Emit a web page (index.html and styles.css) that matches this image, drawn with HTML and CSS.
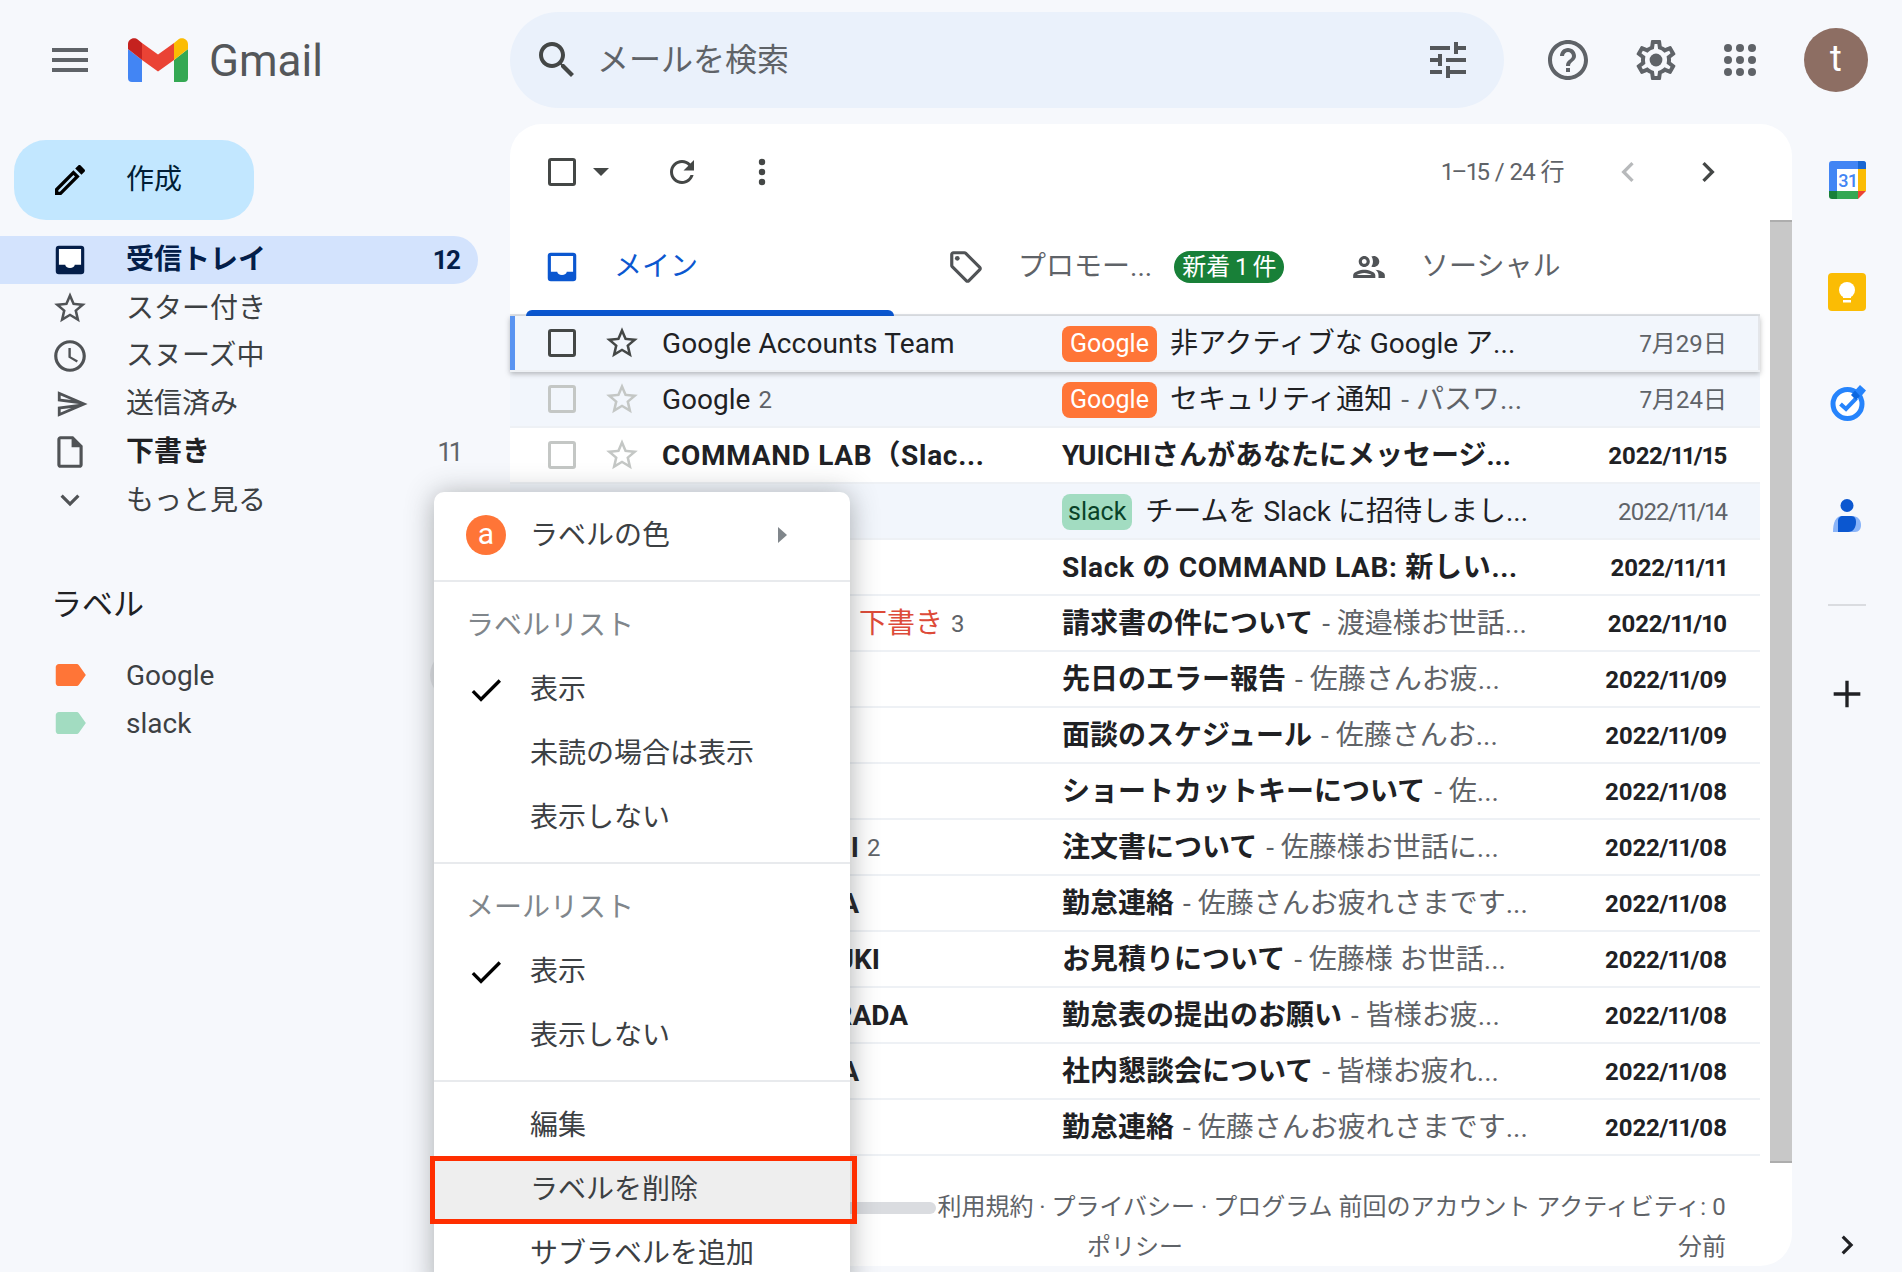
FILE: index.html
```html
<!DOCTYPE html>
<html lang="ja">
<head>
    <meta charset="UTF-8">
    <title>受信トレイ - Gmail</title>
    <link rel="stylesheet" href="styles.css">
</head>
<body>
    <svg class="sprite" width="0" height="0">
        <symbol id="star" viewBox="0 0 24 24"><path d="M22 9.24l-7.19-.62L12 2 9.19 8.63 2 9.24l5.46 4.73L5.82 21 12 17.27 18.18 21l-1.63-7.03L22 9.24zM12 15.4l-3.76 2.27 1-4.28-3.32-2.88 4.38-.38L12 6.1l1.71 4.04 4.38.38-3.32 2.88 1 4.28L12 15.4z"/></symbol>
        <symbol id="check" viewBox="0 0 24 24"><path d="M9 16.17L4.83 12l-1.42 1.41L9 19 21 7l-1.41-1.41z"/></symbol>
        <symbol id="label" viewBox="0 0 24 24"><path d="M17.63 5.84C17.27 5.33 16.67 5 16 5L5 5.01C3.9 5.01 3 5.9 3 7v10c0 1.1.9 1.99 2 1.99L16 19c.67 0 1.27-.33 1.63-.84L22 12l-4.37-6.16z"/></symbol>
        <symbol id="tray" viewBox="0 0 24 24"><rect x="3" y="3" width="18" height="18" rx="2"/><path fill="#fff" d="M5 5h14v10h-4c0 1.2-1.3 2-3 2s-3-.8-3-2H5z"/></symbol>
    </svg>

    <header class="topbar">
        <div class="brand">
            <svg class="icon menu-icon" viewBox="0 0 24 24"><path d="M3 18h18v-2H3v2zm0-5h18v-2H3v2zm0-7v2h18V6H3z"/></svg>
            <svg class="logo" viewBox="0 0 60 44">
                <path fill="#4285f4" d="M0 11l14 11v22H4a4 4 0 0 1-4-4z"/>
                <path fill="#34a853" d="M46 22l14-11v29a4 4 0 0 1-4 4H46z"/>
                <path fill="#ea4335" d="M14 5l16 11.500L46 5v17L30 33.500 14 22z"/>
                <path fill="#c5221f" d="M0 6.500C0 1 6-1.500 10 1.800L14 5v17L0 11z"/>
                <path fill="#fbbc04" d="M46 5l4-3.200C54-1.500 60 1 60 6.500V11L46 22z"/>
            </svg>
            <span class="wordmark">Gmail</span>
        </div>
        <div class="search">
            <svg class="icon" viewBox="0 0 24 24"><path d="M15.500 14h-.79l-.28-.27C15.410 12.590 16 11.110 16 9.500 16 5.910 13.090 3 9.500 3S3 5.910 3 9.500 5.910 16 9.500 16c1.610 0 3.090-.59 4.230-1.570l.27.28v.79l5 4.990L20.490 19l-4.990-5zm-6 0C7.010 14 5 11.990 5 9.500S7.010 5 9.500 5 14 7.010 14 9.500 11.990 14 9.500 14z"/></svg>
            <span class="search-text">メールを検索</span>
            <svg class="icon tune" viewBox="0 0 24 24"><path d="M3 17v2h6v-2H3zM3 5v2h10V5H3zm10 16v-2h8v-2h-8v-2h-2v6h2zM7 9v2H3v2h4v2h2V9H7zm14 4v-2H11v2h10zm-6-4h2V7h4V5h-4V3h-2v6z"/></svg>
        </div>
        <div class="top-actions">
            <svg class="icon" viewBox="0 0 24 24"><path d="M11 18h2v-2h-2v2zm1-16C6.480 2 2 6.480 2 12s4.480 10 10 10 10-4.480 10-10S17.520 2 12 2zm0 18c-4.410 0-8-3.590-8-8s3.590-8 8-8 8 3.590 8 8-3.590 8-8 8zm0-14c-2.210 0-4 1.790-4 4h2c0-1.100.9-2 2-2s2 .9 2 2c0 2-3 1.750-3 5h2c0-2.250 3-2.500 3-5 0-2.210-1.790-4-4-4z"/></svg>
            <svg class="icon" viewBox="0 0 24 24"><path d="M19.430 12.980c.04-.32.07-.64.07-.98 0-.34-.03-.66-.07-.98l2.110-1.650c.19-.15.24-.42.12-.64l-2-3.460c-.09-.16-.26-.25-.44-.25-.06 0-.12.01-.17.03l-2.490 1c-.52-.4-1.080-.73-1.690-.98l-.38-2.650C14.460 2.180 14.250 2 14 2h-4c-.25 0-.46.18-.49.42l-.38 2.650c-.61.25-1.170.59-1.690.98l-2.490-1c-.06-.02-.12-.03-.18-.03-.17 0-.34.09-.43.25l-2 3.460c-.13.22-.07.49.12.64l2.110 1.650c-.04.32-.07.65-.07.98 0 .33.03.66.07.98l-2.110 1.650c-.19.15-.24.42-.12.64l2 3.460c.09.16.26.25.44.25.06 0 .12-.01.17-.03l2.490-1c.52.4 1.080.73 1.690.98l.38 2.650c.03.24.24.42.49.42h4c.25 0 .46-.18.49-.42l.38-2.650c.61-.25 1.170-.59 1.690-.98l2.490 1c.06.02.12.03.18.03.17 0 .34-.09.43-.25l2-3.460c.12-.22.07-.49-.12-.64l-2.110-1.650zm-1.980-1.710c.04.31.05.52.05.73 0 .21-.02.43-.05.73l-.14 1.130.89.7 1.080.84-.7 1.210-1.270-.51-1.040-.42-.9.68c-.43.32-.84.56-1.250.73l-1.060.43-.16 1.130-.2 1.350h-1.400l-.19-1.350-.16-1.130-1.060-.43c-.43-.18-.83-.41-1.230-.71l-.91-.7-1.060.43-1.270.51-.7-1.210 1.080-.84.89-.7-.14-1.130c-.03-.31-.05-.54-.05-.74s.02-.43.05-.73l.14-1.130-.89-.7-1.080-.84.7-1.210 1.270.51 1.040.42.9-.68c.43-.32.84-.56 1.250-.73l1.060-.43.16-1.130.2-1.350h1.390l.19 1.350.16 1.130 1.060.43c.43.18.83.41 1.230.71l.91.7 1.060-.43 1.270-.51.7 1.210-1.070.85-.89.7.14 1.130z"/><circle cx="12" cy="12" r="3.200"/></svg>
            <svg class="icon" viewBox="0 0 48 48"><circle cx="12" cy="12" r="4"/><circle cx="24" cy="12" r="4"/><circle cx="36" cy="12" r="4"/><circle cx="12" cy="24" r="4"/><circle cx="24" cy="24" r="4"/><circle cx="36" cy="24" r="4"/><circle cx="12" cy="36" r="4"/><circle cx="24" cy="36" r="4"/><circle cx="36" cy="36" r="4"/></svg>
            <div class="avatar">t</div>
        </div>
    </header>

    <div class="main">
        <aside class="sidebar">
            <div class="compose">
                <svg class="compose-icon" viewBox="0 0 24 24"><path d="M3 17.250V21h3.750L17.810 9.940l-3.750-3.750L3 17.250zM5.920 19H5v-.92l9.060-9.060.92.92L5.920 19zM20.710 5.630l-2.340-2.340c-.2-.2-.45-.29-.71-.29s-.51.1-.7.29l-1.830 1.830 3.750 3.750 1.830-1.830c.39-.39.39-1.020 0-1.410z"/></svg>
                <span>作成</span>
            </div>
            <nav>
                <div class="nav-row nav-active">
                    <svg class="nav-icon"><use href="#tray"/></svg>
                    <span class="nav-name">受信トレイ</span>
                    <span class="nav-count">12</span>
                </div>
                <div class="nav-row">
                    <svg class="nav-icon"><use href="#star"/></svg>
                    <span class="nav-name nudge">スター付き</span>
                </div>
                <div class="nav-row">
                    <svg class="nav-icon" viewBox="0 0 24 24"><path d="M11.990 2C6.470 2 2 6.480 2 12s4.470 10 9.990 10C17.520 22 22 17.520 22 12S17.520 2 11.990 2zM12 20c-4.420 0-8-3.580-8-8s3.580-8 8-8 8 3.580 8 8-3.580 8-8 8zm.5-13H11v6l5.250 3.150.75-1.230-4.500-2.670z"/></svg>
                    <span class="nav-name">スヌーズ中</span>
                </div>
                <div class="nav-row">
                    <span class="nav-icon send-box"><svg class="send-icon" viewBox="0 0 24 24"><path d="M4.010 6.030l7.510 3.220-7.520-1 .01-2.220m7.500 8.720L4 17.970v-2.220l7.510-1M2.010 3L2 10l15 2-15 2 .01 7L23 12 2.010 3z"/></svg></span>
                    <span class="nav-name">送信済み</span>
                </div>
                <div class="nav-row nav-bold">
                    <svg class="nav-icon" viewBox="0 0 24 24"><path d="M14 2H6c-1.100 0-1.990.9-1.990 2L4 20c0 1.100.89 2 1.990 2H18c1.100 0 2-.9 2-2V8l-6-6zM6 20V4h7v5h5v11H6z"/></svg>
                    <span class="nav-name">下書き</span>
                    <span class="nav-count count-plain">11</span>
                </div>
                <div class="nav-row">
                    <svg class="nav-icon" viewBox="0 0 24 24"><path d="M16.590 8.590L12 13.170 7.410 8.590 6 10l6 6 6-6z"/></svg>
                    <span class="nav-name nudge">もっと見る</span>
                </div>
            </nav>
            <div class="label-head">
                <span class="label-title">ラベル</span>
                <svg class="label-plus" viewBox="0 0 24 24"><path d="M2 11h20v2H2z"/><path d="M11 2h2v20h-2z"/></svg>
            </div>
            <div class="nav-row">
                <svg class="nav-icon label-orange"><use href="#label"/></svg>
                <span class="nav-name nudge">Google</span>
                <span class="label-more"></span>
            </div>
            <div class="nav-row">
                <svg class="nav-icon label-green"><use href="#label"/></svg>
                <span class="nav-name nudge">slack</span>
            </div>
        </aside>

        <section class="card">
            <div class="toolbar">
                <span class="box"></span>
                <span class="caret"></span>
                <svg class="tool refresh" viewBox="0 0 24 24"><path d="M17.650 6.350C16.200 4.900 14.210 4 12 4c-4.420 0-7.990 3.580-7.990 8s3.570 8 7.990 8c3.730 0 6.840-2.550 7.730-6h-2.080c-.82 2.330-3.040 4-5.650 4-3.310 0-6-2.690-6-6s2.690-6 6-6c1.660 0 3.140.69 4.220 1.780L13 11h7V4l-2.350 2.350z"/></svg>
                <svg class="tool more" viewBox="0 0 36 36"><circle cx="18" cy="8" r="3.200"/><circle cx="18" cy="18" r="3.200"/><circle cx="18" cy="28" r="3.200"/></svg>
                <span class="pages">1–15 / 24 行</span>
                <svg class="chevron chevron-off" viewBox="0 0 24 24"><path d="M15.410 7.410L14 6l-6 6 6 6 1.410-1.410L10.830 12z"/></svg>
                <svg class="chevron" viewBox="0 0 24 24"><path d="M10 6L8.590 7.410 13.170 12l-4.580 4.590L10 18l6-6z"/></svg>
            </div>

            <div class="tabs">
                <div class="tab tab-main">
                    <svg class="tab-icon"><use href="#tray"/></svg>
                    <span>メイン</span>
                </div>
                <div class="tab tab-promo">
                    <svg class="tab-icon" viewBox="0 0 24 24"><path d="M21.410 11.580l-9-9C12.050 2.220 11.550 2 11 2H4c-1.100 0-2 .9-2 2v7c0 .55.22 1.050.59 1.420l9 9c.36.36.86.58 1.410.58s1.050-.22 1.410-.59l7-7c.37-.36.59-.86.59-1.410s-.23-1.060-.59-1.420zM13 20.010L4 11V4h7v-.01l9 8.990-7 7.020z"/><circle cx="6.500" cy="6.500" r="1.500"/></svg>
                    <span>プロモー...</span>
                    <span class="new-badge">新着 1 件</span>
                </div>
                <div class="tab tab-social">
                    <svg class="tab-icon" viewBox="0 0 24 24"><path d="M9 13.750c-2.340 0-7 1.170-7 3.500V19h14v-1.750c0-2.330-4.660-3.500-7-3.500zM4.340 17c.84-.58 2.870-1.250 4.660-1.250s3.820.67 4.660 1.250H4.340zM9 12c1.930 0 3.500-1.570 3.500-3.500S10.930 5 9 5 5.500 6.570 5.500 8.500 7.070 12 9 12zm0-5c.83 0 1.500.67 1.500 1.500S9.830 10 9 10s-1.500-.67-1.500-1.500S8.170 7 9 7zm7.040 6.810c1.160.84 1.960 1.960 1.960 3.440V19h4v-1.750c0-2.020-3.500-3.170-5.960-3.440zM15 12c1.930 0 3.500-1.570 3.500-3.500S16.930 5 15 5c-.54 0-1.040.13-1.500.35.63.89 1 1.980 1 3.150s-.37 2.260-1 3.150c.46.22.96.35 1.500.35z"/></svg>
                    <span>ソーシャル</span>
                </div>
            </div>

            <div class="mail-list">
                <div class="row read hover">
                    <span class="box"></span><svg class="star"><use href="#star"/></svg>
                    <span class="sender">Google Accounts Team</span>
                    <span class="subject"><span class="chip chip-google">Google</span>非アクティブな Google ア...</span>
                    <span class="date">7月29日</span>
                </div>
                <div class="row read">
                    <span class="box"></span><svg class="star"><use href="#star"/></svg>
                    <span class="sender">Google <span class="num">2</span></span>
                    <span class="subject"><span class="chip chip-google">Google</span>セキュリティ通知 <span class="snippet">- パスワ...</span></span>
                    <span class="date">7月24日</span>
                </div>
                <div class="row">
                    <span class="box"></span><svg class="star"><use href="#star"/></svg>
                    <span class="sender latin">COMMAND LAB（Slac...</span>
                    <span class="subject">YUICHIさんがあなたにメッセージ...</span>
                    <span class="date">2022/11/15</span>
                </div>
                <div class="row read">
                    <span class="box"></span><svg class="star"><use href="#star"/></svg>
                    <span class="sender">Slack</span>
                    <span class="subject"><span class="chip chip-slack">slack</span>チームを Slack に招待しまし...</span>
                    <span class="date date-tight">2022/11/14</span>
                </div>
                <div class="row">
                    <span class="box"></span><svg class="star"><use href="#star"/></svg>
                    <span class="sender">Slack</span>
                    <span class="subject latin">Slack の COMMAND LAB: 新しい...</span>
                    <span class="date">2022/11/11</span>
                </div>
                <div class="row">
                    <span class="box"></span><svg class="star"><use href="#star"/></svg>
                    <span class="sender"><span class="name w197"></span><span class="draft">下書き</span> <span class="num">3</span></span>
                    <span class="subject">請求書の件について <span class="snippet">- 渡邉様お世話...</span></span>
                    <span class="date">2022/11/10</span>
                </div>
                <div class="row">
                    <span class="box"></span><svg class="star"><use href="#star"/></svg>
                    <span class="sender">Satou</span>
                    <span class="subject">先日のエラー報告 <span class="snippet">- 佐藤さんお疲...</span></span>
                    <span class="date">2022/11/09</span>
                </div>
                <div class="row">
                    <span class="box"></span><svg class="star"><use href="#star"/></svg>
                    <span class="sender">Satou</span>
                    <span class="subject">面談のスケジュール <span class="snippet">- 佐藤さんお...</span></span>
                    <span class="date">2022/11/09</span>
                </div>
                <div class="row">
                    <span class="box"></span><svg class="star"><use href="#star"/></svg>
                    <span class="sender">Satou</span>
                    <span class="subject">ショートカットキーについて <span class="snippet">- 佐...</span></span>
                    <span class="date">2022/11/08</span>
                </div>
                <div class="row">
                    <span class="box"></span><svg class="star"><use href="#star"/></svg>
                    <span class="sender"><span class="name w197">YUICHI</span> <span class="num">2</span></span>
                    <span class="subject">注文書について <span class="snippet">- 佐藤様お世話に...</span></span>
                    <span class="date">2022/11/08</span>
                </div>
                <div class="row">
                    <span class="box"></span><svg class="star"><use href="#star"/></svg>
                    <span class="sender"><span class="name w197">SATO ERIKA</span></span>
                    <span class="subject">勤怠連絡 <span class="snippet">- 佐藤さんお疲れさまです...</span></span>
                    <span class="date">2022/11/08</span>
                </div>
                <div class="row">
                    <span class="box"></span><svg class="star"><use href="#star"/></svg>
                    <span class="sender"><span class="name w218">TANAKA YUKI</span></span>
                    <span class="subject">お見積りについて <span class="snippet">- 佐藤様 お世話...</span></span>
                    <span class="date">2022/11/08</span>
                </div>
                <div class="row">
                    <span class="box"></span><svg class="star"><use href="#star"/></svg>
                    <span class="sender"><span class="name w246">SHO HARADA</span></span>
                    <span class="subject">勤怠表の提出のお願い <span class="snippet">- 皆様お疲...</span></span>
                    <span class="date">2022/11/08</span>
                </div>
                <div class="row">
                    <span class="box"></span><svg class="star"><use href="#star"/></svg>
                    <span class="sender"><span class="name w197">SATO ERIKA</span></span>
                    <span class="subject">社内懇談会について <span class="snippet">- 皆様お疲れ...</span></span>
                    <span class="date">2022/11/08</span>
                </div>
                <div class="row">
                    <span class="box"></span><svg class="star"><use href="#star"/></svg>
                    <span class="sender">Satou</span>
                    <span class="subject">勤怠連絡 <span class="snippet">- 佐藤さんお疲れさまです...</span></span>
                    <span class="date">2022/11/08</span>
                </div>
            </div>

            <div class="card-foot">
                <div class="storage"><div class="storage-bar"></div></div>
                <div class="foot-links">利用規約 · プライバシー · プログラム ポリシー</div>
                <div class="foot-activity">前回のアカウント アクティビティ: 0 分前</div>
            </div>
            <div class="scrollbar"></div>
        </section>

        <aside class="rail">
            <svg class="addon" viewBox="0 0 37 38">
                <path fill="#4285f4" d="M3 0h31a3 3 0 0 1 3 3v5H8v22H0V3a3 3 0 0 1 3-3z"/>
                <path fill="#1967d2" d="M29 0h5a3 3 0 0 1 3 3v5h-8z"/>
                <path fill="#fbbc04" d="M29 8h8v22h-8z"/>
                <path fill="#34a853" d="M8 30h21v8H8z"/>
                <path fill="#188038" d="M0 30h8v8H3a3 3 0 0 1-3-3z"/>
                <path fill="#ea4335" d="M29 30h8l-8 8z"/>
                <path fill="#fff" d="M8 8h21v22H8z"/>
                <text class="cal-num" x="18.500" y="25.500">31</text>
            </svg>
            <svg class="addon addon-keep" viewBox="0 0 38 38">
                <rect width="38" height="38" rx="4" fill="#fbbc04"/>
                <circle cx="19" cy="17" r="8" fill="#fff"/>
                <path fill="#fff" d="M15 20h8v5h-8zM15 27h8v2.500h-8z"/>
            </svg>
            <svg class="addon addon-tasks" viewBox="0 0 38 36">
                <circle cx="19.500" cy="19" r="14.500" fill="#fff" stroke="#2684fc" stroke-width="5"/>
                <path fill="none" stroke="#2684fc" stroke-width="4" d="M12.500 19l5.500 5L28.500 13"/>
                <path fill="#2684fc" d="M32 0l6 5.500-5 6-6-6z"/>
                <path fill="#0b67e0" d="M27 5.500l5 5.500-4 4-5-5z"/>
            </svg>
            <svg class="addon addon-people" viewBox="0 0 28 33">
                <circle cx="14" cy="6.500" r="6.500" fill="#0b57d0"/>
                <path fill="#8ab4f8" d="M0 33c0-10 3-16 9-16h10c6 0 9 4 9 9 0 4-2 7-6 7z"/>
                <path fill="#0b57d0" d="M5 33V22c0-3 2-5 5-5h8c4 0 5 3 5 6 0 6-3 10-8 10z"/>
            </svg>
            <div class="rail-line"></div>
            <svg class="rail-plus" viewBox="0 0 24 24"><path d="M20 13h-7v7h-2v-7H4v-2h7V4h2v7h7v2z"/></svg>
            <svg class="rail-end" viewBox="0 0 24 24"><path d="M10 6L8.590 7.410 13.170 12l-4.580 4.590L10 18l6-6z"/></svg>
        </aside>
    </div>

    <!-- ラベルのメニュー -->
    <div class="label-menu">
        <div class="menu-color">
            <span class="color-dot">a</span>
            <span class="color-name">ラベルの色</span>
            <svg class="menu-arrow" viewBox="0 0 9 16"><path d="M0 0l9 8-9 8z"/></svg>
        </div>
        <div class="menu-section">
            <div class="menu-title">ラベルリスト</div>
            <div class="menu-item"><svg class="tick"><use href="#check"/></svg>表示</div>
            <div class="menu-item"><span class="no-tick"></span>未読の場合は表示</div>
            <div class="menu-item"><span class="no-tick"></span>表示しない</div>
        </div>
        <div class="menu-section">
            <div class="menu-title">メールリスト</div>
            <div class="menu-item"><svg class="tick"><use href="#check"/></svg>表示</div>
            <div class="menu-item"><span class="no-tick"></span>表示しない</div>
        </div>
        <div class="menu-last">
            <div class="menu-item"><span class="no-tick"></span>編集</div>
            <div class="menu-item menu-marked"><span class="no-tick"></span>ラベルを削除</div>
            <div class="menu-item"><span class="no-tick"></span>サブラベルを追加</div>
        </div>
    </div>
</body>
</html>
```

FILE: styles.css
```css
* {
    box-sizing: border-box;
}
html, body {
    height: 100%;
}
body {
    margin: 0;
    background: #f6f8fc;
    color: #202124;
    font-family: Roboto, "Noto Sans CJK JP", sans-serif;
    font-size: 28px;
    line-height: 40px;
    font-variant-numeric: proportional-nums;
    overflow: hidden;
    position: relative;
}
svg {
    display: block;
    flex: none;
}
.sprite {
    position: absolute;
}
.icon {
    width: 48px;
    height: 48px;
    fill: #5f6368;
}

/* ヘッダー */
.topbar {
    display: flex;
    align-items: center;
    height: 120px;
    padding-right: 34px;
}
.brand {
    display: flex;
    align-items: center;
    width: 510px;
    padding-left: 46px;
}
.logo {
    width: 60px;
    height: 44px;
    margin-left: 34px;
}
.wordmark {
    margin-left: 21px;
    padding-top: 2px;
    font-size: 44px;
    color: #54575a;
}
.search {
    display: flex;
    align-items: center;
    width: 994px;
    height: 96px;
    padding: 0 32px 0 23px;
    background: #eaf1fb;
    border-radius: 48px;
}
.search .icon {
    fill: #444746;
}
.search-text {
    margin-left: 16px;
    font-size: 32px;
    color: #5f6368;
}
.search .tune {
    margin-left: auto;
    fill: #54575a;
}
.top-actions {
    display: flex;
    align-items: center;
    margin-left: 40px;
}
.top-actions .icon {
    margin-right: 40px;
}
.top-actions .icon:nth-child(3) {
    margin-left: -4px;
}
.avatar {
    width: 64px;
    height: 64px;
    border-radius: 50%;
    background: #8d6e63;
    color: #fff;
    font-size: 36px;
    line-height: 62px;
    text-align: center;
}

.main {
    display: flex;
    height: 1152px;
    margin-top: 4px;
}

/* サイドバー */
.sidebar {
    width: 510px;
    padding-top: 16px;
}
.compose {
    display: flex;
    align-items: center;
    width: 240px;
    height: 80px;
    margin-left: 14px;
    padding-left: 36px;
    margin-bottom: 16px;
    background: #c2e7ff;
    border-radius: 32px;
    color: #001d35;
}
.compose-icon {
    width: 40px;
    height: 40px;
    margin-right: 36px;
}
.nav-row {
    display: flex;
    align-items: center;
    width: 478px;
    height: 48px;
    padding-left: 51px;
    border-radius: 0 24px 24px 0;
    color: #3c4043;
}
.nav-icon {
    flex: none;
    width: 38px;
    height: 38px;
    margin-right: 37px;
    fill: #505356;
}
.send-box {
    display: flex;
    align-items: center;
    justify-content: center;
}
.send-icon {
    width: 34px;
    height: 34px;
    margin-left: 3px;
}
.nav-name {
    white-space: nowrap;
}
.nudge {
    padding-top: 2px;
}
.nav-count {
    margin-left: auto;
    padding-right: 17px;
    font-size: 26px;
    font-weight: 700;
}
.count-plain {
    font-weight: 400;
    color: #5f6368;
}
.nav-active {
    background: #d3e3fd;
    color: #041e49;
    font-weight: 700;
}
.nav-active .nav-icon {
    fill: #041e49;
}
.nav-bold .nav-name {
    font-weight: 700;
    color: #202124;
}
.label-head {
    display: flex;
    align-items: center;
    justify-content: space-between;
    width: 478px;
    height: 54px;
    margin-top: 52px;
    margin-bottom: 21px;
    padding-left: 51px;
    font-size: 31px;
}
.label-title {
    padding-top: 4px;
}
.label-plus {
    width: 48px;
    height: 48px;
    fill: #444746;
}
.label-orange {
    fill: #ff7537;
}
.label-green {
    fill: #a2dcc1;
}
.label-more {
    width: 48px;
    height: 48px;
    margin-left: auto;
    border-radius: 50%;
    background: #e4e6ea;
}

/* メール一覧 */
.card {
    position: relative;
    width: 1282px;
    height: 1142px;
    background: #fff;
    border-radius: 32px;
}
.toolbar {
    display: flex;
    align-items: center;
    height: 96px;
    padding: 0 64px 0 38px;
}
.box {
    flex: none;
    width: 28px;
    height: 28px;
    border: 3.5px solid #c4c7c5;
    border-radius: 3px;
}
.toolbar .box {
    border-color: #444746;
}
.caret {
    width: 0;
    height: 0;
    margin-left: 17px;
    border-left: 8px solid transparent;
    border-right: 8px solid transparent;
    border-top: 8px solid #444746;
}
.tool {
    width: 36px;
    height: 36px;
    fill: #444746;
}
.refresh {
    margin-left: 55px;
}
.more {
    margin-left: 44px;
}
.pages {
    margin-left: auto;
    margin-right: 44px;
    font-size: 24px;
    letter-spacing: -.6px;
    color: #5f6368;
}
.chevron {
    width: 40px;
    height: 40px;
    fill: #444746;
}
.chevron-off {
    margin-right: 40px;
    fill: #b7b9bb;
}
.tabs {
    display: flex;
    height: 96px;
    padding-left: 16px;
}
.tab {
    display: flex;
    align-items: center;
    height: 96px;
    padding-top: 4px;
    padding-bottom: 6px;
    color: #5f6368;
}
.tab-icon {
    width: 38px;
    height: 38px;
    margin-right: 33px;
    fill: #505356;
}
.tab-main {
    position: relative;
    width: 368px;
    padding-left: 17px;
    color: #0b57d0;
}
.tab-main .tab-icon {
    fill: #0b57d0;
}
.tab-main::after {
    content: "";
    position: absolute;
    left: 0;
    right: 0;
    bottom: 0;
    height: 6px;
    background: #0b57d0;
    border-radius: 6px 6px 0 0;
}
.tab-promo {
    width: 437px;
    padding-left: 53px;
}
.tab-social {
    padding-left: 19px;
}
.new-badge {
    display: block;
    height: 32px;
    margin-left: 22px;
    padding: 0 8px;
    border-radius: 16px;
    background: #188038;
    color: #fff;
    font-size: 24px;
    line-height: 32px;
    white-space: nowrap;
}
.mail-list {
    width: 1250px;
    border-top: 2px solid #e0e3e7;
    margin-top: -2px;
}
.row {
    display: flex;
    align-items: center;
    height: 56px;
    padding: 0 33px 0 38px;
    border-bottom: 2px solid #eef1f5;
    font-weight: 700;
    white-space: nowrap;
}
.read {
    background: #f2f6fc;
    font-weight: 400;
}
.hover {
    position: relative;
    box-shadow: inset 5px 0 0 #5a94f1, inset -2px 0 0 #e4e6ea, 0 2px 5px rgba(60, 64, 67, .35);
}
.hover .box {
    border-color: #444746;
}
.hover .star {
    fill: #444746;
}
.hover .sender {
    letter-spacing: .15px;
}
.star {
    width: 38px;
    height: 38px;
    margin-left: 27px;
    fill: #c4c7c5;
}
.sender {
    display: flex;
    align-items: center;
    width: 400px;
    margin-left: 21px;
    padding-top: 2px;
    overflow: hidden;
}
.latin {
    letter-spacing: .7px;
}
.name {
    display: block;
    text-align: right;
}
.w197 {
    width: 197px;
}
.w218 {
    width: 218px;
}
.w246 {
    width: 246px;
}
.num {
    margin-left: 8px;
    font-size: 24px;
    font-weight: 400;
    color: #5f6368;
}
.draft {
    font-weight: 400;
    color: #dd4b39;
}
.subject {
    flex: 1;
    display: flex;
    align-items: center;
    padding-top: 2px;
    white-space: pre;
}
.snippet {
    margin-left: 2px;
    font-weight: 400;
    color: #5f6368;
}
.chip {
    height: 36px;
    margin-right: 13px;
    padding: 0 8px;
    border-radius: 8px;
    font-size: 25px;
    line-height: 36px;
}
.chip-google {
    background: #ff7537;
    color: #fff;
}
.chip-slack {
    padding: 0 6px;
    background: #a2dcc1;
    color: #094228;
}
.date {
    padding-top: 2px;
    font-size: 24px;
    letter-spacing: -.3px;
}
.read .date {
    letter-spacing: 0;
    color: #5f6368;
}
.read .date-tight {
    letter-spacing: -1px;
}
.card-foot {
    display: flex;
    padding-top: 31px;
    font-size: 24px;
    line-height: 40px;
    color: #5f6368;
}
.storage {
    width: 426px;
    padding: 15px 0 0 30px;
}
.storage-bar {
    height: 12px;
    background: #dadce0;
    border-radius: 6px;
}
.foot-links {
    width: 398px;
    text-align: center;
}
.foot-activity {
    width: 392px;
    text-align: right;
}
.scrollbar {
    position: absolute;
    top: 96px;
    right: 0;
    width: 22px;
    height: 943px;
    background: #c8c8c8;
    border-top: 2px solid #adadad;
    border-bottom: 2px solid #adadad;
}

/* 右のパネル */
.rail {
    display: flex;
    flex-direction: column;
    align-items: center;
    flex: 1;
    padding-top: 37px;
    padding-bottom: 12px;
}
.addon {
    width: 37px;
    height: 38px;
}
.addon-keep {
    width: 38px;
    margin-top: 74px;
}
.addon-tasks {
    width: 38px;
    height: 36px;
    margin-top: 74px;
}
.addon-people {
    width: 28px;
    height: 33px;
    margin-top: 78px;
}
.cal-num {
    font-size: 18px;
    font-weight: 500;
    fill: #4285f4;
    text-anchor: middle;
}
.rail-line {
    width: 38px;
    height: 2px;
    margin-top: 72px;
    background: #dadce0;
}
.rail-plus {
    width: 40px;
    height: 40px;
    margin-top: 68px;
    fill: #202124;
}
.rail-end {
    width: 38px;
    height: 38px;
    margin-top: auto;
    fill: #202124;
}

/* ラベルのメニュー */
.label-menu {
    position: absolute;
    top: 492px;
    left: 434px;
    width: 416px;
    height: 800px;
    background: #fff;
    border-radius: 10px 10px 0 0;
    box-shadow: 0 2px 28px rgba(60, 64, 67, .42);
    color: #3c4043;
}
.menu-color {
    display: flex;
    align-items: center;
    height: 90px;
    padding-left: 32px;
    padding-bottom: 3px;
    border-bottom: 2px solid #e8eaed;
}
.color-dot {
    width: 40px;
    height: 40px;
    margin-right: 24px;
    border-radius: 50%;
    background: #ff7537;
    color: #fff;
    line-height: 38px;
    text-align: center;
    font-size: 30px;
}
.color-name {
    padding-top: 2px;
}
.menu-arrow {
    width: 9px;
    height: 16px;
    margin-left: 108px;
    fill: #80868b;
}
.menu-section {
    padding: 10px 0 14px;
    border-bottom: 2px solid #e8eaed;
}
.menu-title {
    display: flex;
    align-items: center;
    height: 64px;
    padding-left: 32px;
    padding-top: 3px;
    color: #80868b;
}
.menu-item {
    position: relative;
    display: flex;
    align-items: center;
    height: 64px;
    padding-left: 32px;
    padding-top: 4px;
}
.tick {
    width: 40px;
    height: 40px;
    margin-right: 24px;
    fill: #000;
}
.no-tick {
    width: 64px;
}
.menu-last {
    padding-top: 10px;
}
.menu-marked {
    background: #eeeeee;
}
.menu-marked::after {
    content: "";
    position: absolute;
    top: 0;
    bottom: -4px;
    left: -4px;
    right: -7px;
    border: 5px solid #ff2e00;
}
```
